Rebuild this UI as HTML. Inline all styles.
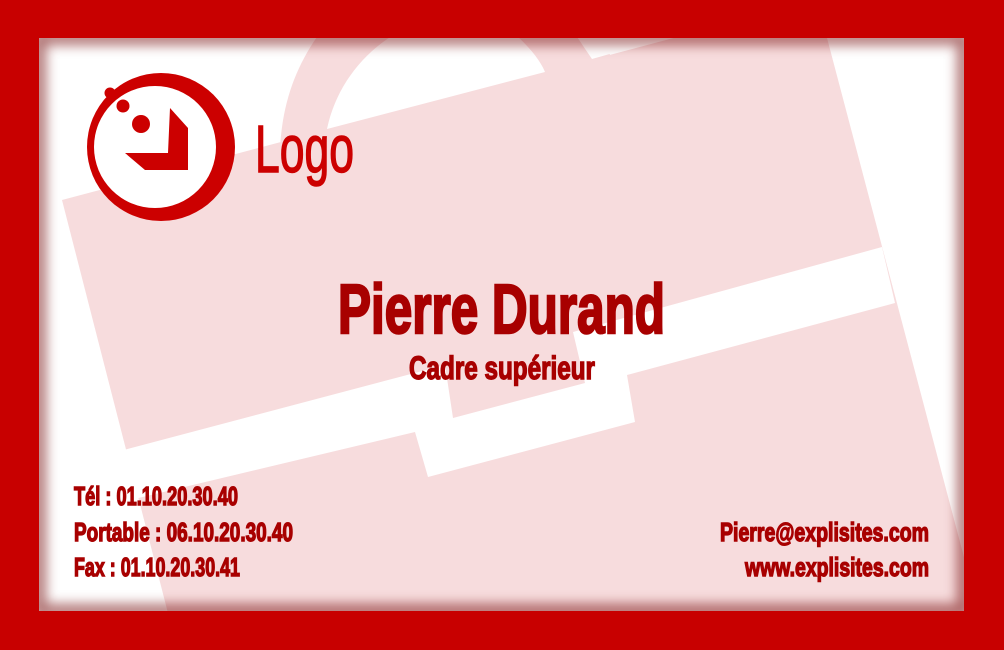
<!DOCTYPE html>
<html><head><meta charset="utf-8"><style>
html,body{margin:0;padding:0;background:#c80000;width:1004px;height:650px;overflow:hidden}
svg{display:block}
.t{font-family:"Liberation Sans Narrow","Liberation Sans",sans-serif;font-weight:bold;fill:#a80000;stroke:#a80000;stroke-width:1.4}
</style></head><body>
<svg width="1004" height="650" viewBox="0 0 1004 650">
<defs>
<clipPath id="c"><rect x="39" y="38" width="925" height="573"/></clipPath>
<filter id="sh" x="-5%" y="-5%" width="110%" height="110%"><feGaussianBlur stdDeviation="6"/></filter>
</defs>
<rect width="1004" height="650" fill="#c80000"/>
<g clip-path="url(#c)">
<rect x="39" y="38" width="925" height="573" fill="#fff"/>
<polygon points="62,200 817,0 970,580 985,660 180,660" fill="#f7dcdd"/>
<path d="M280,150 C282,100 298,62 322,30 L600,30 L620,80 Z" fill="#f7dcdd"/>
<path d="M327,129 C335,90 360,55 395,34 L515,34 C530,48 540,60 545,72 Z" fill="#fff"/>
<path d="M575,34 L592,59 L680,34 Z" fill="#fff"/>
<polygon points="120,451 445,365 453,418 585,383 573,332 882,247 895,303 627,375 635,422 428,477 415,432 130,500" fill="#fff"/>
<rect x="39" y="38" width="925" height="573" fill="none" stroke="rgba(110,0,0,0.55)" stroke-width="14" filter="url(#sh)"/>
</g>
<!-- logo -->
<circle cx="161" cy="147" r="74" fill="#cc0000"/>
<circle cx="155" cy="147" r="61" fill="#fff"/>
<path d="M98,104 L118,86 L110,78 L90,98 Z" fill="#fff"/>
<circle cx="110" cy="93" r="5.5" fill="#cc0000"/>
<circle cx="123" cy="106" r="6.5" fill="#cc0000"/>
<circle cx="141" cy="124" r="9" fill="#cc0000"/>
<polygon points="170,108 188,128 188,170 145,170 125,153 168,153" fill="#cc0000"/>
<text x="255" y="172" textLength="99" lengthAdjust="spacingAndGlyphs" font-family="Liberation Sans Narrow, Liberation Sans, sans-serif" font-size="67" fill="#cc0000" stroke="#cc0000" stroke-width="1.5">Logo</text>
<text class="t" x="338" y="333" textLength="327" lengthAdjust="spacingAndGlyphs" font-size="70" style="stroke-width:2.5">Pierre Durand</text>
<text class="t" x="409" y="379" textLength="186" lengthAdjust="spacingAndGlyphs" font-size="32">Cadre supérieur</text>
<text class="t" x="74" y="505" textLength="164" lengthAdjust="spacingAndGlyphs" font-size="26">Tél : 01.10.20.30.40</text>
<text class="t" x="74" y="541" textLength="219" lengthAdjust="spacingAndGlyphs" font-size="26">Portable : 06.10.20.30.40</text>
<text class="t" x="74" y="576" textLength="166" lengthAdjust="spacingAndGlyphs" font-size="26">Fax : 01.10.20.30.41</text>
<text class="t" x="720" y="541" textLength="209" lengthAdjust="spacingAndGlyphs" font-size="26">Pierre@explisites.com</text>
<text class="t" x="745" y="576" textLength="184" lengthAdjust="spacingAndGlyphs" font-size="26">www.explisites.com</text>
</svg>
</body></html>
